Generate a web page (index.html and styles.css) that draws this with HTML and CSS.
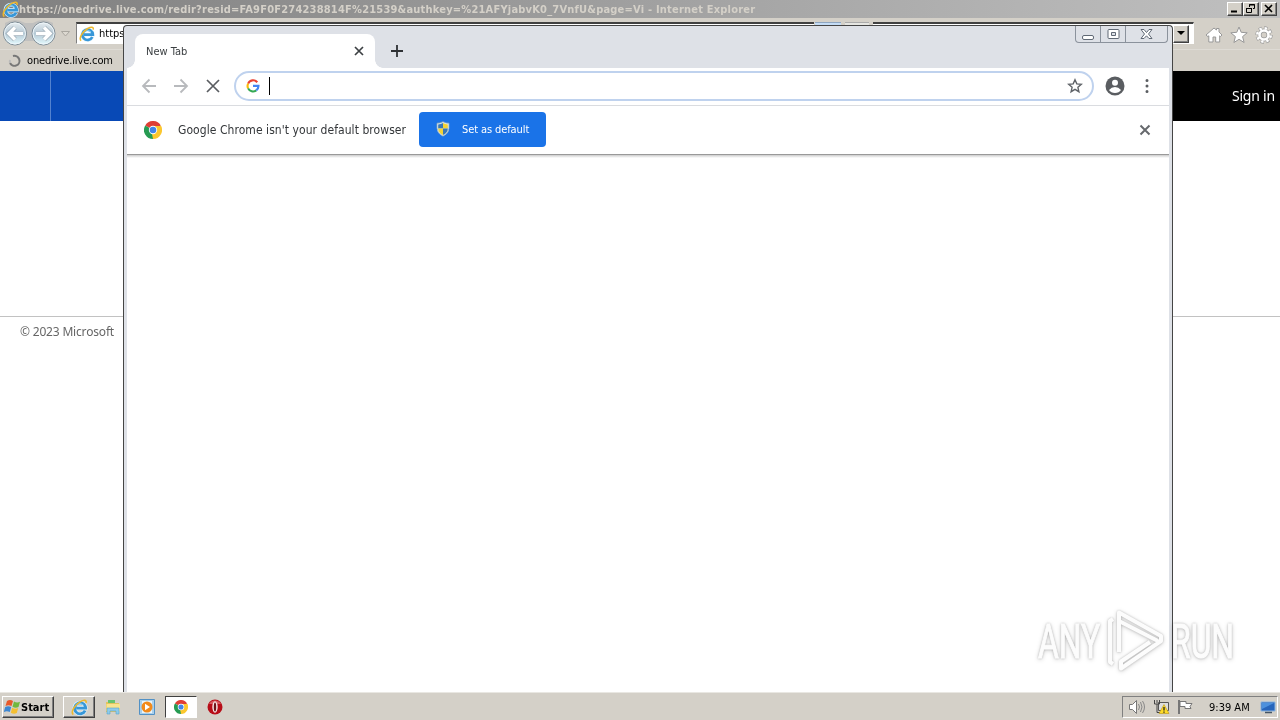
FILE: index.html
```html
<!DOCTYPE html>
<html lang="en">
<head>
    <meta charset="UTF-8">
    <meta name="viewport" content="width=device-width, initial-scale=1.0">
    <title>New Tab</title>
    <link rel="stylesheet" href="styles.css">
</head>
<body>

<!-- shared icons -->
<svg class="defs" width="0" height="0">
    <symbol id="ie" viewBox="0 0 16 16">
        <path d="M13.300 11A5.200 5.200 0 1 1 13.800 8.600H5" fill="none" stroke="#e4f4fc" stroke-width="3.800"/>
        <path d="M13.300 11A5.200 5.200 0 1 1 13.800 8.600H5" fill="none" stroke="#3797d8" stroke-width="2.700"/>
        <path d="M4 6.500A5 5 0 0 1 12 6" fill="none" stroke="#8ad4f6" stroke-width=".8"/>
        <path d="M2.200 14.600C-.8 13 3.300 5.700 8.800 2.500c3.600-2.100 6-1.700 5.400 1.100" fill="none" stroke="#eeb82c" stroke-width="1.500"/>
    </symbol>
    <symbol id="chrome" viewBox="0 0 18 18">
        <path d="M9 9 1.2 4.5A9 9 0 0 1 16.8 4.5z" fill="#df3e35"/>
        <path d="M9 9 16.8 4.5A9 9 0 0 1 9 18z" fill="#fbc72e"/>
        <path d="M9 9V18A9 9 0 0 1 1.2 4.5z" fill="#269b52"/>
        <path d="M9 5h8l.5 1.5L13 11 9 18l-1-5z" fill="#fbc72e"/>
        <circle cx="9" cy="9" r="4.2" fill="#fff"/>
        <circle cx="9" cy="9" r="3.3" fill="#4285e8"/>
    </symbol>
</svg>

<div class="desktop">
    <div class="ie-window">
        <div class="ie-title">
            <svg width="17" height="17"><use href="#ie"/></svg>
            <span class="ie-title-text">https://onedrive.live.com/redir?resid=FA9F0F274238814F%21539&amp;authkey=%21AFYjabvK0_7VnfU&amp;page=Vi - Internet Explorer</span>
            <div class="caption-buttons">
                <span class="bevel"><svg width="13" height="11"><path d="M3 8.5h6" stroke="#000" stroke-width="2"/></svg></span>
                <span class="bevel"><svg width="13" height="11"><path d="M5.5 4V1.5h5v4H9M5 2h6M2.5 5.5h5v4h-5zM2 5.5h6" fill="none" stroke="#000"/></svg></span>
                <span class="bevel close"><svg width="13" height="11"><path d="m3 2 7 7m0-7-7 7" stroke="#000" stroke-width="1.6"/></svg></span>
            </div>
        </div>
        <div class="ie-nav">
            <svg width="74" height="31" viewBox="0 0 74 31">
                <defs>
                    <linearGradient id="glass" x2="0" y2="1">
                        <stop offset="0" stop-color="#e8edf0"/>
                        <stop offset=".5" stop-color="#b5c9d5"/>
                        <stop offset="1" stop-color="#e5fbff"/>
                    </linearGradient>
                </defs>
                <path d="M5 5Q15-1 25 5h8Q43-1 53 5v18H5z" fill="#c0c0bf"/>
                <circle cx="15" cy="15.500" r="11.500" fill="url(#glass)" stroke="#7d8b95"/>
                <circle cx="43.500" cy="15.500" r="11.500" fill="url(#glass)" stroke="#7d8b95"/>
                <circle cx="15" cy="15.500" r="10.500" fill="none" stroke="#eef6fa"/>
                <circle cx="43.500" cy="15.500" r="10.500" fill="none" stroke="#eef6fa"/>
                <path d="M23 15.500H9m6-6-6 6 6 6M36 15.500h14m-6-6 6 6-6 6" fill="none" stroke="#a2b1bc" stroke-width="5"/>
                <path d="M23 15.500H9m6-6-6 6 6 6M36 15.500h14m-6-6 6 6-6 6" fill="none" stroke="#fff" stroke-width="3.400"/>
                <path d="M61.500 13.500h8l-4 4.500z" fill="#ddd9d1" stroke="#aaa7a0"/>
            </svg>
            <div class="address">
                <svg width="16" height="16"><use href="#ie"/></svg>
                <span>https</span>
                <span class="addr-tools"><i class="tool-blue"></i><i class="tool-gray"></i></span>
                <span class="bevel drop"><svg width="12" height="14"><path d="M2 5h8L6 9z" fill="#000"/></svg></span>
            </div>
            <div class="ie-tools">
                <svg width="18" height="18" viewBox="0 0 18 18"><path d="m1 9 8-7 2.500 2V2.500H14V6l3 3-1.500 1.500-.8-.7V16h-4v-5H8v5H3.800V9.800l-.9.800z" fill="#fff" stroke="#989898"/></svg>
                <svg width="18" height="18" viewBox="0 0 18 18"><path d="m9 1 2.200 5.300 6 .5-4.600 3.800 1.500 5.900L9 13.300l-5.100 3.200 1.500-5.900L.8 6.800l6-.5z" fill="#fff" stroke="#989898"/></svg>
                <svg width="18" height="18" viewBox="0 0 18 18">
                    <circle cx="9" cy="9" r="6.900" fill="none" stroke="#999" stroke-width="3.500" stroke-dasharray="3.200 2.220"/>
                    <circle cx="9" cy="9" r="4.500" fill="none" stroke="#999" stroke-width="4"/>
                    <circle cx="9" cy="9" r="6.700" fill="none" stroke="#fff" stroke-width="2.600" stroke-dasharray="2.400 2.862" stroke-dashoffset="-.4"/>
                    <circle cx="9" cy="9" r="4.500" fill="none" stroke="#fff" stroke-width="2.600"/>
                </svg>
            </div>
        </div>
        <div class="ie-tabs">
            <svg width="14" height="14" viewBox="0 0 14 14"><path d="M5 2a5 5 0 1 1-3 7" fill="none" stroke="#777" stroke-width="2"/><path d="M2 9a5 5 0 0 1 0-3" fill="none" stroke="#bbb" stroke-width="2"/></svg>
            <span>onedrive.live.com</span>
        </div>
        <div class="page">
            <div class="page-header">
                <div class="brand"></div>
                <span class="sign-in">Sign in</span>
            </div>
            <div class="page-body"></div>
            <div class="page-footer"><span>© 2023 Microsoft</span></div>
        </div>
    </div>

    <div class="taskbar">
        <div class="start">
            <svg width="17" height="16" viewBox="0 0 17 16">
                <path d="M3 2q3-2 6 0L7.500 7Q4.500 5.500 1.500 7z" fill="#e8592a"/>
                <path d="M10 2.500q3 2 6 .3L14.500 8q-3 1.500-6-.3z" fill="#72b83e"/>
                <path d="M1.200 8q3-1.500 6 0L5.800 13q-3-1.500-6 0z" fill="#3d87d2"/>
                <path d="M8.200 8.700q3 1.800 6 .3L12.800 14q-3 1.500-6-.3z" fill="#f4bf30"/>
            </svg>
            <span>Start</span>
        </div>
        <div class="task raised"><svg width="17" height="17"><use href="#ie"/></svg></div>
        <div class="task">
            <svg width="16" height="16" viewBox="0 0 16 16">
                <path d="M1 3h5l1 1h7v9H1z" fill="#e3c45e"/>
                <path d="M3 1h7v3H3z" fill="#67c46e"/>
                <path d="M1.500 5h13.500v7H1.500z" fill="#f8e48f"/>
                <path d="M2 15V9h12v6h-3v-3H5v3z" fill="#8ecbea" stroke="#58a5ce" stroke-width=".6"/>
            </svg>
        </div>
        <div class="task">
            <svg width="16" height="16" viewBox="0 0 16 16">
                <path d="M.5.5h15v15H.5z" fill="#a9d0ec" stroke="#5291c5"/>
                <path d="M3 2h10v12H3z" fill="#e9f4fa"/>
                <circle cx="8" cy="8" r="5.500" fill="#f28a1b"/>
                <path d="m6 4.800 5 3.200-5 3.200z" fill="#fff"/>
            </svg>
        </div>
        <div class="task pressed"><svg width="14" height="14"><use href="#chrome"/></svg></div>
        <div class="task">
            <svg width="16" height="16" viewBox="0 0 16 16"><circle cx="8" cy="8" r="7.500" fill="#b70d18"/><path d="M2 5a7 7 0 0 1 12 0z" fill="#d75a60"/><ellipse cx="8" cy="8" rx="2.700" ry="5.700" fill="#f7e8e8"/><ellipse cx="8" cy="8" rx="1.200" ry="4.600" fill="#6e151a"/></svg>
        </div>
        <div class="tray">
            <svg width="18" height="16" viewBox="0 0 18 16"><path d="M1.500 5.500h3l4-4v13l-4-4h-3z" fill="#fff" stroke="#777"/><path d="M10.500 5q2 3 0 6m2-8q3 5 0 10m2-11q4 6 0 12" fill="none" stroke="#888"/></svg>
            <svg width="17" height="16" viewBox="0 0 17 16"><path d="M5.500 3.500h10v8h-10z" fill="#ddd" stroke="#555"/><path d="M1.500 1v4h5V1M4 1v3M4 5v8.500h5" fill="none" stroke="#444"/><path d="m11 5.500 5 9H6z" fill="#ffdc27" stroke="#ba9510" stroke-width=".6"/><path d="M11 8v3.500m0 1v1.200" stroke="#222" stroke-width="1.300"/></svg>
            <svg width="17" height="16" viewBox="0 0 17 16"><path d="M2 1v14" stroke="#777" stroke-width="2"/><path d="M3 2.500h6v2h6l-2 3 1 2H8v-2H3z" fill="#fff" stroke="#777"/></svg>
            <span class="clock">9:39 AM</span>
            <svg width="16" height="14" viewBox="0 0 16 14"><path d="M1 2h14v9H1z" fill="#2765bb" stroke="#8bb5e0"/><path d="M2 3h12L2 9z" fill="#4d91dd"/><path d="M5 12.500h7" stroke="#456" stroke-width="1.500"/></svg>
        </div>
    </div>

    <div class="chrome-window">
        <div class="tab-strip">
            <div class="tab">
                <span>New Tab</span>
                <svg width="10" height="10" viewBox="0 0 10 10"><path d="m1 1 8 8m0-8-8 8" stroke="#3c4043" stroke-width="1.700"/></svg>
            </div>
            <svg class="plus" width="12" height="12" viewBox="0 0 12 12"><path d="M6 0v12M0 6h12" stroke="#2e3134" stroke-width="1.800"/></svg>
            <div class="window-buttons">
                <span><svg class="min" width="14" height="8"><rect x="1.500" y="3.500" width="11" height="4" rx="1.500" fill="#fff" stroke="#606975"/></svg></span>
                <span><svg width="13" height="11"><rect x="1" y=".5" width="11" height="9" rx="1" fill="#fff" stroke="#606975"/><path d="M4.500 3.500h4v3h-4z" fill="#dee1e7" stroke="#606975"/></svg></span>
                <span class="wide"><svg width="13" height="11" viewBox="0 0 13 11"><path d="M1 .5h3l2.500 3L9 .5h3L8.500 5l3.500 4.500H9L6.500 6.800 4 9.500H1L4.500 5z" fill="#fff" stroke="#606975"/></svg></span>
            </div>
        </div>
        <div class="toolbar">
            <svg width="16" height="16" viewBox="0 0 16 16"><path d="M15 8H2m6.500-6.500L2 8l6.500 6.500" fill="none" stroke="#b8babd" stroke-width="1.800"/></svg>
            <svg width="16" height="16" viewBox="0 0 16 16"><path d="M1 8h13M7.500 1.500 14 8l-6.500 6.500" fill="none" stroke="#b8babd" stroke-width="1.800"/></svg>
            <svg width="16" height="16" viewBox="0 0 16 16"><path d="m2 2 12 12m0-12L2 14" stroke="#5a5d61" stroke-width="1.700"/></svg>
            <div class="omnibox">
                <svg width="14" height="14" viewBox="0 0 18 18">
                    <path d="M14.500 4.200A7 7 0 0 0 2.700 6" fill="none" stroke="#ea4335" stroke-width="2.700"/>
                    <path d="M2.700 6a7 7 0 0 0 0 6" fill="none" stroke="#fbbc05" stroke-width="2.700"/>
                    <path d="M2.700 12a7 7 0 0 0 10.500 2.600" fill="none" stroke="#34a853" stroke-width="2.700"/>
                    <path d="M13.200 14.600A7 7 0 0 0 16 8.800H9" fill="none" stroke="#4285f4" stroke-width="2.800"/>
                </svg>
                <i class="caret"></i>
                <svg class="star" width="16" height="16" viewBox="0 0 16 16"><path d="m8 1.800 1.800 4.100 4.500.4-3.400 3 1 4.400L8 11.400l-3.900 2.300 1-4.400-3.400-3 4.500-.4z" fill="none" stroke="#5f6368" stroke-width="1.400"/></svg>
            </div>
            <svg class="profile" width="20" height="20" viewBox="0 0 20 20"><circle cx="10" cy="10" r="9.500" fill="#5a5d61"/><circle cx="10" cy="6.700" r="3" fill="#fff"/><path d="M4 14q2.500-3 6-3t6 3q-2 3-6 3t-6-3z" fill="#fff"/></svg>
            <svg class="menu" width="4" height="16" viewBox="0 0 4 16"><path d="M2 2.500h0M2 8h0M2 13.500h0" stroke="#5a5d61" stroke-width="3" stroke-linecap="round"/></svg>
        </div>
        <div class="infobar">
            <svg width="18" height="18"><use href="#chrome"/></svg>
            <span class="info-text">Google Chrome isn't your default browser</span>
            <button class="set-default">
                <svg width="14" height="16" viewBox="0 0 14 16">
                    <path d="M7 .7q3 1.600 6 1.500v5q0 5-6 8-6-3-6-8v-5Q4 2.300 7 .7z" fill="#dbeaf0" stroke="#92a9b6" stroke-width=".7"/>
                    <path d="M7 2v5.500H2.200V3.400Q4.800 3.400 7 2z" fill="#3978b8"/>
                    <path d="M7 2v5.500h4.800V3.400Q9.200 3.400 7 2z" fill="#f5d334"/>
                    <path d="M7 14V7.500H2.200Q2.200 11.500 7 14z" fill="#f5d334"/>
                    <path d="M7 14V7.500h4.800Q11.800 11.500 7 14z" fill="#3978b8"/>
                </svg>
                <span>Set as default</span>
            </button>
            <svg class="dismiss" width="12" height="12" viewBox="0 0 12 12"><path d="m1.500 1.500 9 9m0-9-9 9" stroke="#66696d" stroke-width="2"/></svg>
        </div>
        <div class="new-tab"></div>
    </div>

    <div class="watermark">
        <span>ANY</span>
        <svg width="58" height="64" viewBox="0 0 58 64"><path d="M6 10 3 12v41l3 2M12 43V3.500l42 23.500v5L14 59.500v-7L43 33M12 12l39 20" fill="none" stroke="#fcfcfc" stroke-width="4" stroke-linejoin="round"/></svg>
        <span>RUN</span>
    </div>
</div>

</body>
</html>
```

FILE: styles.css
```css
* {
    box-sizing: border-box;
}
body {
    margin: 0;
    font-family: "DejaVu Sans Condensed", "DejaVu Sans", sans-serif;
    font-size: 11px;
    color: #000;
}
svg {
    display: block;
    flex: none;
}
.defs {
    position: absolute;
}
.desktop {
    position: relative;
    width: 1280px;
    height: 720px;
    overflow: hidden;
    display: flex;
    flex-direction: column;
    background-color: #fff;
    white-space: nowrap;
}
.bevel {
    display: flex;
    background-color: #d4d0c8;
    border: 1px solid;
    border-color: #fff #404040 #404040 #fff;
    box-shadow: inset -1px -1px 0 #808080;
}

/* Internet Explorer */
.ie-window {
    flex: 1;
    display: flex;
    flex-direction: column;
}
.ie-title {
    height: 18px;
    display: flex;
    align-items: center;
    padding: 0 3px 0 2px;
    background: linear-gradient(90deg, #808080, #c0c0c0);
    color: #d4d0c8;
    font-weight: bold;
}
.ie-title-text {
    letter-spacing: 0.205px;
}
.caption-buttons {
    display: flex;
    margin-left: auto;
}
.caption-buttons .bevel {
    width: 16px;
    height: 14px;
}
.caption-buttons .close {
    margin-left: 2px;
}
.ie-nav {
    height: 31px;
    display: flex;
    background-color: #d4d0c8;
}
.address {
    width: 1118px;
    height: 22px;
    margin: 4px 0 0 2px;
    padding-left: 2px;
    display: flex;
    align-items: center;
    background-color: #fff;
    border: 1px solid #808080;
    border-top: 2px solid #404040;
    border-right-color: #fff;
    border-bottom-color: #fff;
}
.address > span:nth-of-type(1) {
    margin-left: 4px;
}
.addr-tools {
    align-self: flex-start;
    display: flex;
    gap: 4px;
    height: 4px;
    margin: -2px 0 0 690px;
    padding: 0 4px 0 1px;
    background-color: #d4d0c8;
}
.tool-blue {
    width: 26px;
    background-color: #c4dcf5;
    border-top: 1px solid #8ea5c0;
}
.tool-gray {
    width: 24px;
    background-color: #e6e6e2;
    border-top: 1px solid #aaa;
}
.drop {
    margin: 0 4px 0 auto;
    width: 16px;
    height: 18px;
    padding-left: 1px;
}
.ie-tools {
    display: flex;
    gap: 7px;
    margin: 8px 7px 0 auto;
}
.ie-tabs {
    height: 22px;
    display: flex;
    align-items: center;
    gap: 5px;
    padding-left: 8px;
    background-color: #d4d0c8;
    border-top: 1px solid #dedbd5;
    letter-spacing: -0.15px;
}
.page {
    flex: 1;
    display: flex;
    flex-direction: column;
    font-family: "Noto Sans", sans-serif;
}
.page-header {
    height: 50px;
    display: flex;
    align-items: center;
    background-color: #000;
    color: #fff;
    font-size: 14px;
}
.brand {
    width: 400px;
    height: 50px;
    background-color: #0849b6;
    background-image: linear-gradient(90deg, transparent 50px, #5382cf 50px, #5382cf 51px, transparent 51px);
}
.sign-in {
    margin: 0 5px 2px auto;
    letter-spacing: -0.2px;
}
.page-body {
    height: 195px;
}
.page-footer {
    border-top: 1px solid #c2c2c2;
    padding: 7px 20px;
    color: #666;
    font-size: 12px;
    line-height: 16px;
    letter-spacing: -0.18px;
}

/* taskbar */
.taskbar {
    height: 28px;
    display: flex;
    align-items: center;
    padding: 1px 2px 0;
    background-color: #d4d0c8;
    border-top: 1px solid #e9e7e2;
}
.start {
    width: 52px;
    height: 22px;
    display: flex;
    align-items: center;
    padding-left: 1px;
    margin-right: 9px;
    font-weight: bold;
    border: 1px solid;
    border-color: #fff #404040 #404040 #fff;
    box-shadow: inset -1px -1px 0 #808080;
}
.task {
    width: 32px;
    height: 22px;
    margin-right: 2px;
    display: flex;
    align-items: center;
    justify-content: center;
}
.raised {
    border: 1px solid;
    border-color: #fff #404040 #404040 #fff;
    box-shadow: inset -1px -1px 0 #808080;
}
.pressed {
    background-color: #fff;
    border: 1px solid;
    border-color: #404040 #fff #fff #404040;
}
.tray {
    width: 156px;
    height: 22px;
    margin-left: auto;
    display: flex;
    align-items: center;
    gap: 7px;
    padding-left: 5px;
    border: 1px solid;
    border-color: #808080 #fff #fff #808080;
}
.clock {
    margin: 0 3px 0 8px;
}

/* Chrome window sits over Internet Explorer */
.chrome-window {
    position: absolute;
    left: 123px;
    top: 25px;
    width: 1050px;
    height: 667px;
    display: flex;
    flex-direction: column;
    background-color: #dee1e7;
    border: 1px solid #454545;
    border-bottom: 0;
    border-radius: 4px 4px 0 0;
    padding: 0 3px;
}
.tab-strip {
    height: 42px;
    flex: none;
    display: flex;
    padding-left: 8px;
}
.tab {
    position: relative;
    width: 240px;
    height: 34px;
    margin-top: 8px;
    padding: 0 11px;
    display: flex;
    align-items: center;
    justify-content: space-between;
    background-color: #fff;
    border-radius: 8px 8px 0 0;
    color: #3c4043;
}
.tab::before,
.tab::after {
    content: "";
    position: absolute;
    bottom: 0;
    width: 8px;
    height: 8px;
}
.tab::before {
    left: -8px;
    background: radial-gradient(circle at 0 0, transparent 7.5px, #fff 8px);
}
.tab::after {
    right: -8px;
    background: radial-gradient(circle at 100% 0, transparent 7.5px, #fff 8px);
}
.plus {
    margin: 19px 0 0 16px;
}
.window-buttons {
    display: flex;
    height: 17px;
    margin: 0 1px 0 auto;
    border: 1px solid #8b929c;
    border-top: 0;
    border-radius: 0 0 4px 4px;
}
.window-buttons span {
    width: 25px;
    display: flex;
    align-items: center;
    justify-content: center;
    border-right: 1px solid #8b929c;
}
.window-buttons .wide {
    width: 41px;
    border-right: 0;
}
.min {
    margin-top: 3px;
}
.toolbar {
    height: 38px;
    flex: none;
    display: flex;
    align-items: center;
    gap: 16px;
    padding: 0 20px 1px 14px;
    background-color: #fff;
    border-bottom: 1px solid #dadce0;
}
.omnibox {
    flex: 1;
    height: 30px;
    margin-left: -3px;
    display: flex;
    align-items: center;
    padding: 0 9px 0 10px;
    border: 2px solid #bfd2ee;
    border-radius: 15px;
}
.caret {
    width: 1px;
    height: 18px;
    margin-left: 9px;
    background-color: #000;
}
.star {
    margin-left: auto;
}
.profile {
    margin: 0 4px 0 -5px;
}
.infobar {
    height: 48px;
    flex: none;
    display: flex;
    align-items: center;
    padding: 0 18px 0 17px;
    background-color: #fff;
}
.info-text {
    width: 229px;
    margin: 0 12px 0 16px;
    font-size: 12px;
    letter-spacing: 0.06px;
    color: #333639;
}
.set-default {
    width: 127px;
    height: 35px;
    margin-bottom: 2px;
    display: flex;
    align-items: center;
    gap: 12px;
    padding: 0 0 0 17px;
    background-color: #1a73e8;
    border: 0;
    border-radius: 4px;
    font: inherit;
    letter-spacing: -0.1px;
    color: #fff;
}
.dismiss {
    margin-left: auto;
}
.new-tab {
    flex: 1;
    background: linear-gradient(#999 0, #999 1px, #ccc 1px, #fff 4px);
}

/* watermark over everything */
.watermark {
    position: absolute;
    left: 1038px;
    top: 609px;
    display: flex;
    align-items: center;
    gap: 6px;
    font-family: Roboto, sans-serif;
    font-size: 49px;
    color: #fcfcfc;
    filter: drop-shadow(0 0 1px rgba(0, 0, 0, 0.2)) drop-shadow(0 1px 2px rgba(0, 0, 0, 0.18));
    mix-blend-mode: multiply;
}
.watermark span {
    width: 63px;
    -webkit-text-stroke: 1px #fcfcfc;
    transform: scaleX(0.65);
    transform-origin: 0 50%;
}
```
